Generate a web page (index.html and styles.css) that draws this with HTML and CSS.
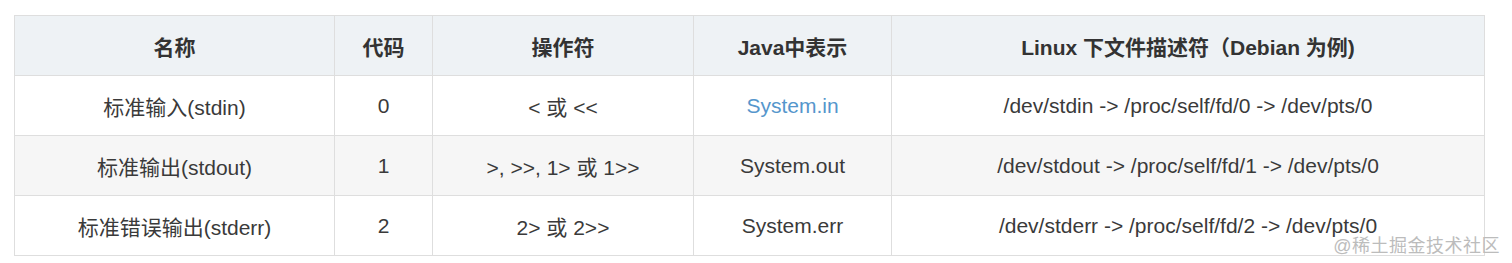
FILE: index.html
```html
<!DOCTYPE html>
<html lang="zh">
<head>
<meta charset="utf-8">
<link rel="stylesheet" href="styles.css">
</head>
<body>
<div class="wrap">
  <table class="fd-table">
    <colgroup>
      <col class="c1"><col class="c2"><col class="c3"><col class="c4"><col class="c5">
    </colgroup>
    <thead>
      <tr>
        <th>名称</th>
        <th>代码</th>
        <th>操作符</th>
        <th>Java中表示</th>
        <th>Linux 下文件描述符（Debian 为例)</th>
      </tr>
    </thead>
    <tbody>
      <tr>
        <td>标准输入(stdin)</td>
        <td>0</td>
        <td>&lt; 或 &lt;&lt;</td>
        <td><span class="link">System.in</span></td>
        <td>/dev/stdin -&gt; /proc/self/fd/0 -&gt; /dev/pts/0</td>
      </tr>
      <tr class="alt">
        <td>标准输出(stdout)</td>
        <td>1</td>
        <td>&gt;, &gt;&gt;, 1&gt; 或 1&gt;&gt;</td>
        <td>System.out</td>
        <td>/dev/stdout -&gt; /proc/self/fd/1 -&gt; /dev/pts/0</td>
      </tr>
      <tr>
        <td>标准错误输出(stderr)</td>
        <td>2</td>
        <td>2&gt; 或 2&gt;&gt;</td>
        <td>System.err</td>
        <td>/dev/stderr -&gt; /proc/self/fd/2 -&gt; /dev/pts/0</td>
      </tr>
    </tbody>
  </table>
  <div class="watermark">@稀土掘金技术社区</div>
</div>
</body>
</html>
```

FILE: styles.css
```css
html, body {
  margin: 0;
  padding: 0;
  background: #ffffff;
}

.wrap {
  position: relative;
  padding: 15px 14px 0 14px;
  font-family: "Liberation Sans", Arial, "Noto Sans CJK SC", sans-serif;
}

.fd-table {
  border-collapse: collapse;
  table-layout: fixed;
  width: 1470px;
  font-size: 21px;
  color: #3a3a3a;
}

.c1 { width: 320px; }
.c2 { width: 98px; }
.c3 { width: 261px; }
.c4 { width: 198px; }
.c5 { width: 593px; }

.fd-table th,
.fd-table td {
  border: 1px solid #dedede;
  text-align: center;
  vertical-align: middle;
  height: 59px;
  padding: 0 6px;
  white-space: nowrap;
}

.fd-table thead th {
  background: #eef2f5;
  font-weight: bold;
  color: #333333;
}

.fd-table tr.alt td {
  background: #f6f6f6;
}

.link {
  color: #5596cc;
}

.watermark {
  position: absolute;
  right: 12px;
  top: 231px;
  font-size: 18px;
  color: #bcbcbc;
  letter-spacing: 0.5px;
}
```
